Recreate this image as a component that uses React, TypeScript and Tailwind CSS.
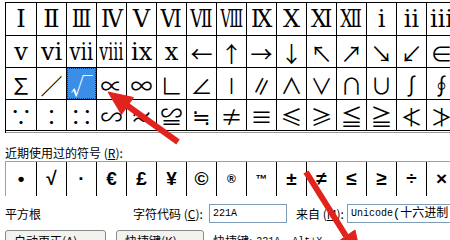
import React from 'react'

const ROWS: string[][] = [
  ['Ⅰ', 'Ⅱ', 'Ⅲ', 'Ⅳ', 'Ⅴ', 'Ⅵ', 'Ⅶ', 'Ⅷ', 'Ⅸ', 'Ⅹ', 'Ⅺ', 'Ⅻ', 'ⅰ', 'ⅱ', 'ⅲ'],
  ['ⅴ', 'ⅵ', 'ⅶ', 'ⅷ', 'ⅸ', 'ⅹ', '←', '↑', '→', '↓', '↖', '↗', '↘', '↙', '∈'],
  ['∑', '∕', '√', '∝', '∞', '∟', '∠', '∣', '∥', '∧', '∨', '∩', '∪', '∫', '∮'],
  ['∵', '∶', '∷', '∽', '≈', '≌', '≒', '≠', '≡', '≤', '≥', '≦', '≧', '≮', '≯'],
]

// squeeze the wide roman numerals so they fit a cell, like the dialog font does
const SQUEEZE: Record<string, string> = {
  'Ⅲ': 'scale-x-[0.85]',
  'Ⅳ': 'scale-x-[0.92]',
  'Ⅵ': 'scale-x-[0.88]',
  'Ⅶ': 'scale-x-[0.72]',
  'Ⅷ': 'scale-x-[0.6]',
  'Ⅸ': 'scale-x-[0.92]',
  'Ⅺ': 'scale-x-[0.92]',
  'Ⅻ': 'scale-x-[0.72]',
  'ⅶ': 'scale-x-[0.82]',
  'ⅷ': 'scale-x-[0.66]',
}

const RECENT = ['•', '√', '·', '€', '£', '¥', '©', '®', '™', '±', '≠', '≤', '≥', '÷', '×']

const ROW_H = ['h-[33px]', 'h-[32px]', 'h-[32px]', 'h-[31px]']

function SymbolGrid() {
  return (
    <div className="ml-[5px] mt-[2px] w-[460px] border-l border-t border-black">
      {ROWS.map((row, r) => (
        <div key={r} className={`flex ${ROW_H[r]}`}>
          {row.map((s, c) => {
            const selected = r === 2 && c === 2
            const roman = r === 0 || (r === 1 && c < 6)
            return (
              <div
                key={c}
                className={`flex shrink-0 items-center justify-center border-b border-r border-black ${c === 0 ? 'w-[31px]' : 'w-[30px]'}`}
              >
                <div
                  className={
                    selected
                      ? 'flex h-full w-full items-center justify-center border border-dotted border-[#1b3a66] bg-[#3a8ee8] text-white'
                      : 'flex h-full w-full items-center justify-center text-black'
                  }
                  style={{
                    fontFamily: roman
                      ? '"DejaVu Serif", "Noto Sans CJK SC", serif'
                      : '"Noto Sans CJK SC", "DejaVu Sans", sans-serif',
                  }}
                >
                  <span
                    className={
                      roman
                        ? `inline-block whitespace-nowrap text-[24px] leading-none ${SQUEEZE[s] ?? ''}`
                        : 'text-[22px] leading-none'
                    }
                  >
                    {s}
                  </span>
                </div>
              </div>
            )
          })}
        </div>
      ))}
      <div className="h-[2px] border-b border-[#9a9a9a]" />
    </div>
  )
}

function RecentRow() {
  return (
    <div className="ml-[5px] flex h-[35px] w-[460px] border-l border-t border-[#a0a0a0]">
      {RECENT.map((s, i) => (
        <div
          key={i}
          className={`flex shrink-0 items-center justify-center border-r border-black text-[19px] font-bold text-black ${i === 0 ? 'w-[31px]' : 'w-[30px]'}`}
          style={{ fontFamily: '"Liberation Sans", "DejaVu Sans", sans-serif' }}
        >
          {s === '®' || s === '™' ? <span className="text-[12px]">{s}</span> : s}
        </div>
      ))}
    </div>
  )
}

function Arrows() {
  return (
    <svg className="pointer-events-none absolute left-0 top-0" width="450" height="240" viewBox="0 0 450 240">
      <g fill="#e2231d" stroke="#e2231d">
        <line x1="178" y1="142" x2="125" y2="104" strokeWidth="6" />
        <polygon points="108,92 121.5,114.5 133.5,97.5" strokeWidth="1" strokeLinejoin="round" />
        <line x1="306" y1="172" x2="346" y2="236" strokeWidth="6" />
        <polygon points="362,262 355,230 336,243" strokeWidth="1" strokeLinejoin="round" />
      </g>
    </svg>
  )
}

export default function App() {
  const cjk = { fontFamily: '"Noto Sans CJK SC", "DejaVu Sans", sans-serif' }
  const mono = { fontFamily: '"Liberation Mono", "Noto Sans CJK SC", monospace' }
  return (
    <div className="relative h-[240px] w-[450px] overflow-hidden bg-white text-black" style={cjk}>
      <SymbolGrid />
      <div className="ml-[5px] mt-[12px] h-[16px] text-[12px] leading-[16px]">
        近期使用过的符号 (<span className="underline">R</span>):
      </div>
      <RecentRow />
      <div className="mt-[8px] flex h-[19px] items-center whitespace-nowrap text-[12px]">
        <div className="ml-[5px] w-[128px] shrink-0">平方根</div>
        <div className="w-[76px] shrink-0">字符代码 (<span className="underline">C</span>):</div>
        <div className="flex h-[19px] w-[78px] shrink-0 items-center border border-[#7f9db9] pl-[3px] text-[10px]" style={mono}>
          221A
        </div>
        <div className="ml-[9px] w-[51px] shrink-0">来自 (<span className="underline">M</span>):</div>
        <div className="flex h-[19px] w-[120px] shrink-0 items-center border border-[#7f9db9] pl-[3px]" style={mono}>
          <span className="text-[10px]">Unicode</span>
          <span className="text-[12px]">(十六进制)</span>
        </div>
      </div>
      <div className="mt-[7px] flex items-start whitespace-nowrap text-[12px]">
        <div className="ml-[5px] flex h-[22px] w-[101px] shrink-0 items-center rounded-[3px] border border-[#8a8a8a] bg-[#f2f2ee] pl-[8px]">
          自动更正(<span className="underline">A</span>)...
        </div>
        <div className="ml-[10px] flex h-[22px] w-[88px] shrink-0 items-center rounded-[3px] border border-[#8a8a8a] bg-[#f2f2ee] pl-[8px]">
          快捷键(<span className="underline">K</span>)...
        </div>
        <div className="ml-[9px] flex h-[22px] shrink-0 items-center">
          快捷键: <span className="ml-[4px] text-[10px]" style={mono}>221A, Alt+X</span>
        </div>
      </div>
      <Arrows />
    </div>
  )
}
